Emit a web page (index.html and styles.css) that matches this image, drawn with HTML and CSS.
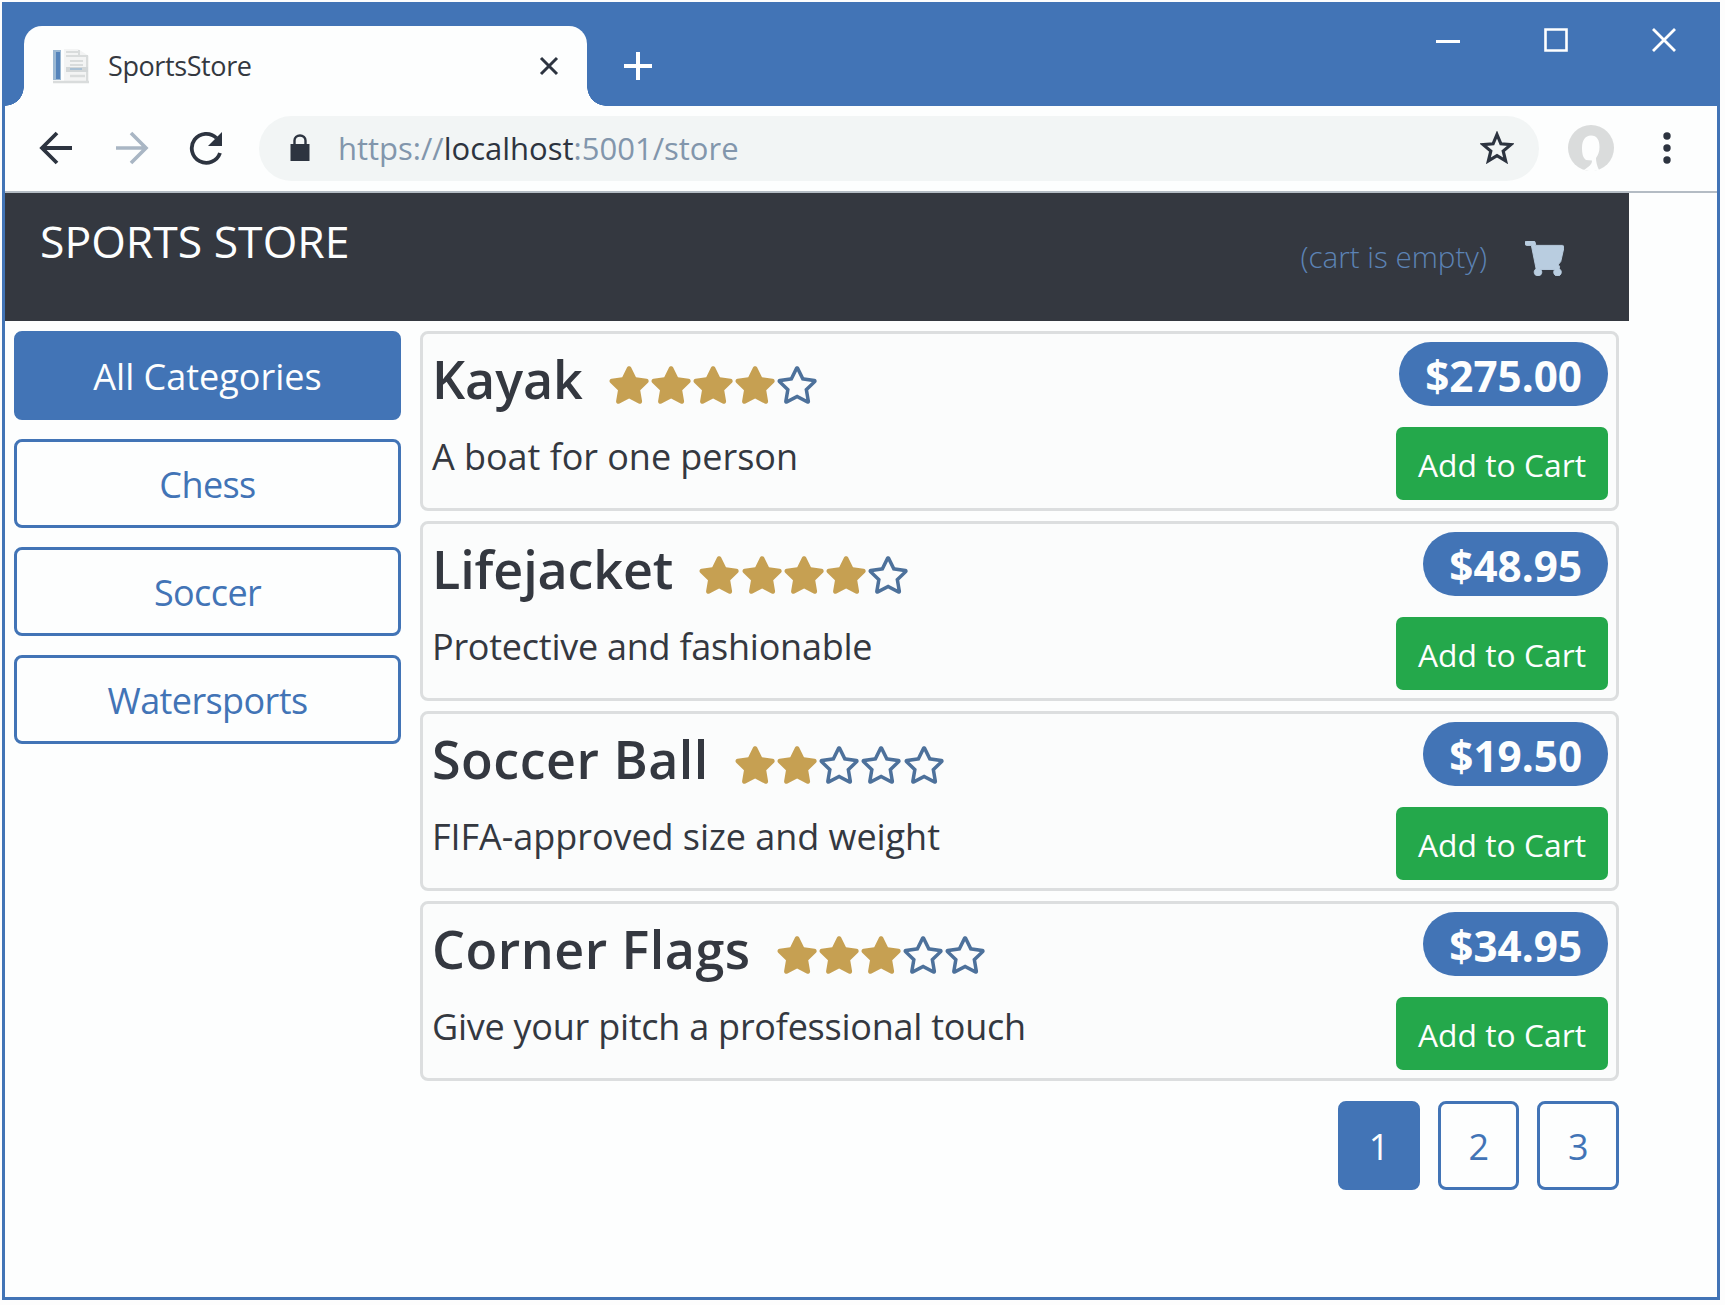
FILE: index.html
```html
<!DOCTYPE html>
<html lang="en">
<head>
<meta charset="utf-8">
<title>SportsStore</title>
<link rel="stylesheet" href="styles.css">
</head>
<body>
<svg class="sprite" width="0" height="0" aria-hidden="true">
  <symbol id="star-full" viewBox="0 0 576 512"><path d="M259.3 17.8L194 150.2 47.9 171.5c-26.2 3.8-36.7 36.1-17.7 54.6l105.7 103-25 145.5c-4.5 26.3 23.2 46 46.4 33.7L288 439.6l130.7 68.7c23.2 12.2 50.9-7.4 46.4-33.7l-25-145.5 105.7-103c19-18.5 8.5-50.8-17.7-54.6L382 150.2 316.7 17.8c-11.7-23.6-45.6-23.9-57.4 0z"/></symbol>
  <symbol id="star-line" viewBox="0 0 576 512"><path d="M528.1 171.5L382 150.2 316.7 17.8c-11.7-23.6-45.6-23.9-57.4 0L194 150.2 47.9 171.5c-26.2 3.8-36.7 36.1-17.7 54.6l105.7 103-25 145.5c-4.5 26.3 23.2 46 46.4 33.7L288 439.6l130.7 68.7c23.2 12.2 50.9-7.4 46.4-33.7l-25-145.5 105.7-103c19-18.5 8.5-50.8-17.7-54.6zM388.6 312.3l23.7 138.4L288 385.4l-124.3 65.3 23.7-138.4-100.6-98 139-20.2 62.2-126 62.2 126 139 20.2-100.6 98z"/></symbol>
</svg>
<div class="window">
  <header class="titlebar">
    <div class="tab">
      <svg class="favicon" width="38" height="38" viewBox="0 0 38 38"><path d="M1 3h8v30H1z" fill="#9bb8d3"/><path d="M4 5h4v27H4z" fill="#5584bb"/><path d="M12 2h14l11 7v27H12z" fill="#f3f4f4"/><path d="M14 5h12M14 9h12M27 3v6h8v26M18 14h13M18 18h13" fill="none" stroke="#d9dcdc" stroke-width="2"/><path d="M14 20h22v5H14z" fill="#d3d7d8"/><path d="M18 22h12" stroke="#9bb8d3" stroke-width="1.5"/><path d="M18 29h15M1 35h36" stroke="#d9dcdc" stroke-width="2.5"/></svg>
      <span class="tab-title">SportsStore</span>
      <svg class="tab-close" width="20" height="20" viewBox="0 0 20 20"><path d="M2 2l16 16M18 2L2 18" stroke="#2d3440" stroke-width="3"/></svg>
    </div>
    <svg class="new-tab" width="28" height="28" viewBox="0 0 28 28"><path d="M14 0v28M0 14h28" stroke="#fff" stroke-width="4"/></svg>
    <div class="window-buttons">
      <svg width="24" height="24" viewBox="0 0 24 24"><path d="M0 13.500h24" stroke="#fff" stroke-width="3"/></svg>
      <svg width="24" height="24" viewBox="0 0 24 24"><path d="M1.5 1.5h21v21h-21z" fill="none" stroke="#fff" stroke-width="2.6"/></svg>
      <svg width="24" height="24" viewBox="0 0 24 24"><path d="M1 1l22 22M23 1L1 23" stroke="#fff" stroke-width="2.8"/></svg>
    </div>
  </header>
  <div class="toolbar">
    <svg width="34" height="34" viewBox="0 0 34 34"><path d="M33 17H3M18 2L3 17l15 15" fill="none" stroke="#2d3440" stroke-width="3.8"/></svg>
    <svg width="34" height="34" viewBox="0 0 34 34"><path d="M1 17h30M16 2l15 15-15 15" fill="none" stroke="#a9b6c4" stroke-width="3.6"/></svg>
    <svg class="reload" width="34" height="34" viewBox="0 0 34 34"><path d="M31 22A14.5 14.5 0 1 1 27.5 7" fill="none" stroke="#2d3440" stroke-width="3.8"/><path d="M33 1v14H19z" fill="#2d3440"/></svg>
    <div class="address">
      <svg class="lock" width="20" height="28" viewBox="0 0 20 28"><path d="M.5 10h19v17H.5z" fill="#2d3440"/><path d="M4.5 11V6.5a5.5 5 0 0 1 11 0V11" fill="none" stroke="#2d3440" stroke-width="2.4"/></svg>
      <span class="url">https://<b>localhost</b>:5001/store</span>
      <svg class="bookmark" width="34" height="34" viewBox="0 0 34 34"><path d="M17 3.5l3.900 9.300 10 .8-7.700 6.500 2.400 9.800-8.600-5.300-8.600 5.300 2.400-9.800-7.700-6.500 10-.8z" fill="none" stroke="#2d3440" stroke-width="3.2"/></svg>
    </div>
    <svg class="avatar" width="46" height="46" viewBox="0 0 46 46"><circle cx="23" cy="23" r="23" fill="#dadcdc"/><path d="M23 10.500c-6 0-9 5-9 12 0 7 1 10 4 12.500l6 .5c0 4-3 6-8 9.500 5 1.500 10 1.500 15 0-2-4-3-8-3-12 2-3 3.500-6 3.500-11 0-7-2.500-11.500-8.500-11.500z" fill="#fdfefe"/></svg>
    <svg class="menu" width="8" height="32" viewBox="0 0 8 32"><g fill="#2d3440"><circle cx="4" cy="4" r="3.7"/><circle cx="4" cy="16" r="3.7"/><circle cx="4" cy="28" r="3.7"/></g></svg>
  </div>
  <div class="page">
    <nav class="navbar">
      <span class="brand">SPORTS STORE</span>
      <span class="cart-note">(cart is empty)</span>
      <svg class="cart" width="39" height="35" viewBox="0 0 576 512" preserveAspectRatio="none"><path fill="#b9cde0" stroke="#b9cde0" stroke-width="14" stroke-linejoin="round" d="M552 64H159l-9-45C148 8 138 0 126.500 0H24C10.700 0 0 10.700 0 24v16c0 13.300 10.700 24 24 24h70l70 343c-17 10-28 28-28 49 0 31 25 56 56 56s56-25 56-56c0-15.700-6.400-29.800-16.800-40h209.600C430 426 424 440 424 456c0 31 25 56 56 56s56-25 56-56c0-22-13-41-31.600-50.400l5.500-24.300c3.400-15-8-29.300-23.400-29.300l41.600-50.700 47.300-208C578.800 78.300 567.400 64 552 64z"/></svg>
    </nav>
    <div class="content">
      <aside class="categories">
        <a class="btn active">All Categories</a>
        <a class="btn">Chess</a>
        <a class="btn">Soccer</a>
        <a class="btn">Watersports</a>
      </aside>
      <main class="products">
        <article class="card">
          <div class="info"><h4><span>Kayak</span><span class="stars"><svg class="full"><use href="#star-full"/></svg><svg class="full"><use href="#star-full"/></svg><svg class="full"><use href="#star-full"/></svg><svg class="full"><use href="#star-full"/></svg><svg><use href="#star-line"/></svg></span></h4><p>A boat for one person</p></div>
          <div class="buy"><span class="price">$275.00</span><button>Add to Cart</button></div>
        </article>
        <article class="card">
          <div class="info"><h4><span>Lifejacket</span><span class="stars"><svg class="full"><use href="#star-full"/></svg><svg class="full"><use href="#star-full"/></svg><svg class="full"><use href="#star-full"/></svg><svg class="full"><use href="#star-full"/></svg><svg><use href="#star-line"/></svg></span></h4><p class="tight">Protective and fashionable</p></div>
          <div class="buy"><span class="price">$48.95</span><button>Add to Cart</button></div>
        </article>
        <article class="card">
          <div class="info"><h4 class="wide"><span>Soccer Ball</span><span class="stars"><svg class="full"><use href="#star-full"/></svg><svg class="full"><use href="#star-full"/></svg><svg><use href="#star-line"/></svg><svg><use href="#star-line"/></svg><svg><use href="#star-line"/></svg></span></h4><p>FIFA-approved size and weight</p></div>
          <div class="buy"><span class="price">$19.50</span><button>Add to Cart</button></div>
        </article>
        <article class="card">
          <div class="info"><h4 class="wide"><span>Corner Flags</span><span class="stars"><svg class="full"><use href="#star-full"/></svg><svg class="full"><use href="#star-full"/></svg><svg class="full"><use href="#star-full"/></svg><svg><use href="#star-line"/></svg><svg><use href="#star-line"/></svg></span></h4><p class="tight">Give your pitch a professional touch</p></div>
          <div class="buy"><span class="price">$34.95</span><button>Add to Cart</button></div>
        </article>
        <div class="pager"><a class="btn active">1</a><a class="btn">2</a><a class="btn">3</a></div>
      </main>
    </div>
  </div>
</div>
</body>
</html>
```
FILE: styles.css
```css
* { box-sizing: border-box; }
body {
  margin: 0;
  padding: 2px 5px 5px 2px;
  height: 1305px;
  background: #fdfdfd;
  font-family: "Open Sans", "Noto Sans", sans-serif;
  color: #343840;
  overflow: hidden;
}
svg { display: block; flex: none; }
.sprite { position: absolute; }
.window {
  height: 1298px;
  border: 3px solid #4274b6;
  border-top: 0;
  background: #fdfefe;
}
.titlebar {
  display: flex;
  height: 104px;
  background: #4274b6;
}
.tab {
  position: relative;
  display: flex;
  align-items: center;
  width: 563px;
  height: 80px;
  margin: 24px 0 0 19px;
  padding: 0 28px 0 28px;
  background: #fdfefe;
  border-radius: 18px 18px 0 0;
}
.tab::before, .tab::after {
  content: "";
  position: absolute;
  bottom: 0;
  width: 19px;
  height: 19px;
}
.tab::before { right: 100%; background: radial-gradient(circle at 0 0, transparent 18.5px, #fdfefe 19px); }
.tab::after { left: 100%; background: radial-gradient(circle at 100% 0, transparent 18.5px, #fdfefe 19px); }
.tab-title { margin: -2px 0 0 18px; font-size: 27px; letter-spacing: -0.4px; }
.tab-close { margin-left: auto; }
.new-tab { margin: 50px 0 0 37px; }
.window-buttons { display: flex; gap: 84px; margin: 26px 41px 0 auto; }
.toolbar {
  display: flex;
  align-items: center;
  height: 87px;
  padding: 0 46px 1px 34px;
  gap: 42px;
  border-bottom: 2px solid #b4bcc4;
}
.reload { margin-left: -2px; }
.address {
  display: flex;
  align-items: center;
  width: 1280px;
  height: 65px;
  margin-left: -6px;
  padding: 0 25px 0 31px;
  border-radius: 33px;
  background: #f2f5f5;
}
.url { margin-left: 28px; font-size: 31px; color: #8296ac; white-space: nowrap; }
.url b { font-weight: 400; color: #2d3440; }
.bookmark { margin-left: auto; }
.avatar { margin-left: -13px; }
.menu { margin-left: 7px; }
.page { width: 1624px; }
.navbar {
  display: flex;
  height: 128px;
  padding: 0 65px 0 35px;
  background: #343840;
}
.brand { margin-top: 18px; font-size: 44.5px; line-height: 60px; color: #fdfefe; }
.cart-note { margin: 43px 38px 0 auto; font-size: 29.6px; line-height: 42px; font-weight: 300; color: #5c83b5; }
.cart { margin-top: 48px; }
.content { display: flex; gap: 19px; padding: 10px 10px 0 9px; }
.categories { display: flex; flex-direction: column; gap: 19px; width: 387px; }
.btn {
  display: flex;
  align-items: center;
  justify-content: center;
  height: 89px;
  padding-top: 2px;
  border: 3px solid #4274b6;
  border-radius: 8px;
  font-size: 36px;
  letter-spacing: -0.6px;
  color: #4274b6;
}
.btn.active { background: #4274b6; color: #fdfefe; letter-spacing: 0; }
.products { display: flex; flex-direction: column; flex: 1; gap: 10px; }
.card {
  display: flex;
  justify-content: space-between;
  height: 180px;
  padding: 8px 8px 0 9px;
  border: 3px solid #dcdedf;
  border-radius: 8px;
  background: #fbfcfc;
}
h4, p { margin: 0; white-space: nowrap; }
h4 { display: flex; height: 76px; font-size: 52px; line-height: 74px; font-weight: 600; letter-spacing: -0.1px; }
h4.wide { letter-spacing: 0.5px; }
.stars { display: flex; margin: 24px 0 0 25px; }
.stars svg { width: 42.2px; height: 38px; fill: #4d719b; }
.stars .full { fill: #c6a052; }
p { font-size: 36px; line-height: 77px; letter-spacing: -0.05px; }
p.tight { letter-spacing: -0.25px; }
.buy { display: flex; flex-direction: column; align-items: flex-end; gap: 21px; }
.price {
  height: 64px;
  padding: 0 26px;
  border-radius: 32px;
  background: #4274b6;
  color: #fdfefe;
  font-size: 42.2px;
  line-height: 68px;
  font-weight: 700;
}
button {
  width: 212px;
  height: 73px;
  padding: 3px 0 0;
  border: 0;
  border-radius: 7px;
  background: #24a84b;
  color: #fdfefe;
  font: 400 31.8px/70px "Open Sans", "Noto Sans", sans-serif;
}
.pager { display: flex; justify-content: flex-end; gap: 18px; margin-top: 10px; }
.pager .btn { width: 82px; }
.pager .btn:nth-child(2) { width: 81px; }
```
